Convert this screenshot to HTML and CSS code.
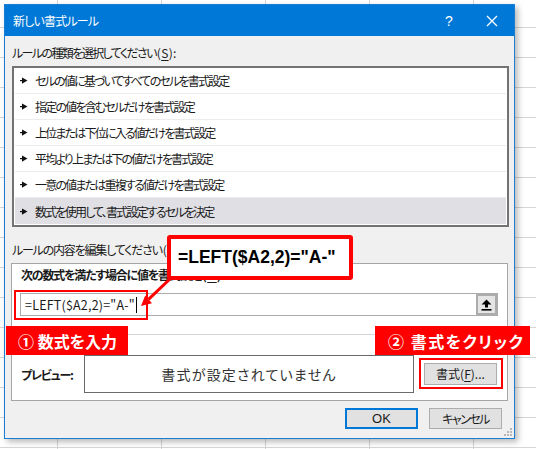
FILE: index.html
```html
<!DOCTYPE html>
<html lang="ja">
<head>
<meta charset="utf-8">
<title>新しい書式ルール</title>
<link rel="stylesheet" href="styles.css">
</head>
<body>
<div class="sheet">
  <div class="dialog">
    <div class="titlebar">
      <span class="title">新しい書式ルール</span>
      <span class="tb-help">?</span>
      <span class="tb-close">
        <svg width="12" height="12" viewBox="0 0 12 12"><path d="M1 1L11 11M11 1L1 11" stroke="#fff" stroke-width="1.3"/></svg>
      </span>
    </div>
    <div class="dbody">
      <div class="lbl lbl-type">ルールの種類を選択してください<span class="acc">(<u>S</u>):</span></div>
      <div class="listbox">
        <div class="row"><svg class="ptr" width="8" height="7" viewBox="0 0 8 7"><rect x="0" y="3" width="3" height="1.2" fill="#111"/><polygon points="2,0.5 7.5,3.6 2,6.7" fill="#111"/></svg><span>セルの値に基づいてすべてのセルを書式設定</span></div>
        <div class="row"><svg class="ptr" width="8" height="7" viewBox="0 0 8 7"><rect x="0" y="3" width="3" height="1.2" fill="#111"/><polygon points="2,0.5 7.5,3.6 2,6.7" fill="#111"/></svg><span>指定の値を含むセルだけを書式設定</span></div>
        <div class="row"><svg class="ptr" width="8" height="7" viewBox="0 0 8 7"><rect x="0" y="3" width="3" height="1.2" fill="#111"/><polygon points="2,0.5 7.5,3.6 2,6.7" fill="#111"/></svg><span>上位または下位に入る値だけを書式設定</span></div>
        <div class="row"><svg class="ptr" width="8" height="7" viewBox="0 0 8 7"><rect x="0" y="3" width="3" height="1.2" fill="#111"/><polygon points="2,0.5 7.5,3.6 2,6.7" fill="#111"/></svg><span>平均より上または下の値だけを書式設定</span></div>
        <div class="row"><svg class="ptr" width="8" height="7" viewBox="0 0 8 7"><rect x="0" y="3" width="3" height="1.2" fill="#111"/><polygon points="2,0.5 7.5,3.6 2,6.7" fill="#111"/></svg><span>一意の値または重複する値だけを書式設定</span></div>
        <div class="row sel"><svg class="ptr" width="8" height="7" viewBox="0 0 8 7"><rect x="0" y="3" width="3" height="1.2" fill="#111"/><polygon points="2,0.5 7.5,3.6 2,6.7" fill="#111"/></svg><span>数式を使用して、書式設定するセルを決定</span></div>
      </div>
      <div class="lbl lbl-edit">ルールの内容を編集してください<span class="acc">(<u>E</u>):</span></div>
      <div class="group">
        <div class="g-label">次の数式を満たす場合に値を書式設定<span class="acc">(<u>O</u>):</span></div>
        <div class="input">
          <span class="formula">=LEFT($A2,2)="A-"</span><span class="caret"></span>
          <span class="refbtn">
            <svg width="11" height="12" viewBox="0 0 11 12"><polygon points="5.5,0.5 10.5,5.5 7,5.5 7,8.5 4,8.5 4,5.5 0.5,5.5" fill="#000"/><rect x="0.5" y="10" width="10" height="1.6" fill="#000"/></svg>
          </span>
        </div>
        <div class="sep"></div>
        <div class="preview-row">
          <div class="pv-label">プレビュー:</div>
          <div class="pv-box">書式が設定されていません</div>
          <div class="btn btn-format">書式(<u>F</u>)...</div>
        </div>
      </div>
      <div class="actions">
        <div class="btn btn-ok">OK</div>
        <div class="btn btn-cancel">キャンセル</div>
      </div>
      <svg class="grip" width="8" height="8" viewBox="0 0 8 8"><rect x="6" y="0" width="2" height="2" fill="#b8b8b8"/><rect x="3" y="3" width="2" height="2" fill="#b8b8b8"/><rect x="6" y="3" width="2" height="2" fill="#b8b8b8"/><rect x="0" y="6" width="2" height="2" fill="#b8b8b8"/><rect x="3" y="6" width="2" height="2" fill="#b8b8b8"/><rect x="6" y="6" width="2" height="2" fill="#b8b8b8"/></svg>
    </div>
  </div>

  <svg class="arrow" width="536" height="449" viewBox="0 0 536 449">
    <line x1="172" y1="277" x2="148.5" y2="299.3" stroke="#ff0000" stroke-width="3"/>
    <polygon points="141,306 152,303.2 145.2,295.4" fill="#ff0000"/>
  </svg>
  <div class="callout">=LEFT($A2,2)="A-"</div>
  <div class="mark mark-formula"></div>
  <div class="mark mark-format"></div>
  <div class="tag tag-1">① 数式を入力</div>
  <div class="tag tag-2">② 書式をクリック</div>
</div>
</body>
</html>
```
FILE: styles.css
```css
* { box-sizing: border-box; }
html, body { margin: 0; padding: 0; }
body {
  font-family: "Noto Sans CJK JP", "Noto Sans", sans-serif;
  font-feature-settings: "palt";
  color: #1a1a1a;
}
.sheet {
  position: relative;
  width: 536px;
  height: 449px;
  overflow: hidden;
  padding: 4px 0 0 4px;
  background-color: #fff;
  background-image:
    linear-gradient(to right, #d6d6d6 1px, transparent 1px),
    linear-gradient(to bottom, #d6d6d6 1px, transparent 1px);
  background-size: 104px 30px, 104px 30px;
  background-position: 57px 0, 0 27px;
}
.dialog {
  position: relative;
  width: 511px;
  height: 435px;
  border: 1px solid #1a7fd4;
  background: #f0f0f0;
  box-shadow: 3px 3px 6px rgba(0,0,0,0.28);
  display: flex;
  flex-direction: column;
  letter-spacing: -1.2px;
}
.titlebar {
  height: 31px;
  background: #0078d7;
  color: #fff;
  display: flex;
  align-items: center;
  font-size: 12px;
  padding-left: 8px;
}
.title { flex: 1; letter-spacing: -0.8px; }
.tb-help { width: 16px; text-align: center; font-family: "Liberation Sans", sans-serif; font-size: 14px; margin-right: 29px; letter-spacing: 0; }
.tb-close { width: 12px; height: 12px; margin-right: 16px; display: flex; }
.dbody {
  position: relative;
  flex: 1;
  display: flex;
  flex-direction: column;
}
.lbl { font-size: 12px; line-height: 16px; height: 16px; padding-left: 7px; }
.lbl-type { letter-spacing: -1.6px; margin-top: 9px; }
.acc { letter-spacing: 0.3px; margin-left: 1px; }
.acc u { text-decoration-thickness: 1px; text-underline-offset: 2px; }
.listbox {
  margin: 5px 0 0 7px;
  width: 497px;
  height: 161px;
  border: 2px solid #737373;
  background: #fff;
  padding: 0 1px 1px 1px;
  display: flex;
  flex-direction: column;
}
.row {
  height: 26px;
  border-bottom: 1px solid #ececec;
  display: flex;
  align-items: center;
  font-size: 12px;
  padding-left: 5px;
  letter-spacing: -1.8px;
}
.row.sel { background: #dfdfe4; border-bottom: none; }
.ptr { margin-right: 7px; flex: none; }
.lbl-edit { margin-top: 15px; }
.group {
  margin: 5px 0 0 6px;
  width: 497px;
  height: 138px;
  border: 1px solid #a6a6a6;
  background: #fff;
  display: flex;
  flex-direction: column;
}
.g-label {
  padding: 3px 0 0 9px;
  font-size: 12px;
  line-height: 16px;
  height: 19px;
  font-weight: bold;
}
.input {
  margin: 10px 0 0 8px;
  width: 478px;
  height: 23px;
  border: 1px solid #ababab;
  display: flex;
  align-items: center;
  padding-left: 4px;
  font-size: 12.5px;
}
.formula { letter-spacing: 0.2px; }
.caret { width: 1px; height: 16px; background: #000; margin-left: 1px; }
.refbtn {
  margin-left: auto;
  width: 21px;
  height: 21px;
  border: 2px solid #acacac;
  background: #e5e5e5;
  display: flex;
  align-items: center;
  justify-content: center;
}
.sep { margin-top: 18px; height: 1px; background: #d4d4d4; }
.preview-row {
  margin-top: 20px;
  display: flex;
  align-items: center;
}
.pv-label {
  width: 72px;
  padding-left: 9px;
  font-size: 12px;
  font-weight: bold;
}
.pv-box {
  width: 330px;
  height: 38px;
  border: 1px solid #6a6a6a;
  display: flex;
  align-items: center;
  justify-content: center;
  font-size: 14px;
  color: #333;
  letter-spacing: 1.2px;
}
.btn {
  height: 22px;
  width: 73px;
  background: #e1e1e1;
  border: 1px solid #adadad;
  display: flex;
  align-items: center;
  justify-content: center;
  font-size: 12px;
  letter-spacing: 0;
}
.btn u { text-underline-offset: 2px; }
.btn-format { margin-left: 10px; margin-top: -1px; }
.actions {
  margin-top: 7px;
  display: flex;
  justify-content: flex-end;
  gap: 11px;
  padding-right: 12px;
}
.actions .btn { height: 21px; }
.btn-ok { border: 2px solid #0078d7; font-family: "Liberation Sans", "Noto Sans CJK JP", sans-serif; font-size: 13px; }
.btn-cancel { letter-spacing: -1.5px; }
.grip { position: absolute; right: 2px; bottom: 2px; }

.arrow { position: absolute; left: 0; top: 0; }
.callout {
  position: absolute;
  left: 167px;
  top: 235px;
  width: 186px;
  height: 45px;
  border: 4px solid #ff0000;
  border-radius: 3px;
  background: #fff;
  font-family: "Liberation Sans", sans-serif;
  font-weight: bold;
  font-size: 17.5px;
  color: #000;
  padding-left: 7px;
  display: flex;
  align-items: center;
}
.mark { position: absolute; border: 2px solid #ff0000; }
.mark-formula { left: 14px; top: 290px; width: 134px; height: 30px; }
.mark-format { left: 419px; top: 358px; width: 84px; height: 31px; }
.tag {
  position: absolute;
  top: 326px;
  height: 29px;
  background: #ff0000;
  color: #fff;
  font-weight: bold;
  font-size: 16px;
  display: flex;
  align-items: center;
}
.tag-1 { left: 6px; width: 122px; padding-left: 12px; }
.tag-2 { left: 375px; width: 155px; padding-left: 13px; letter-spacing: 1.5px; }
```
